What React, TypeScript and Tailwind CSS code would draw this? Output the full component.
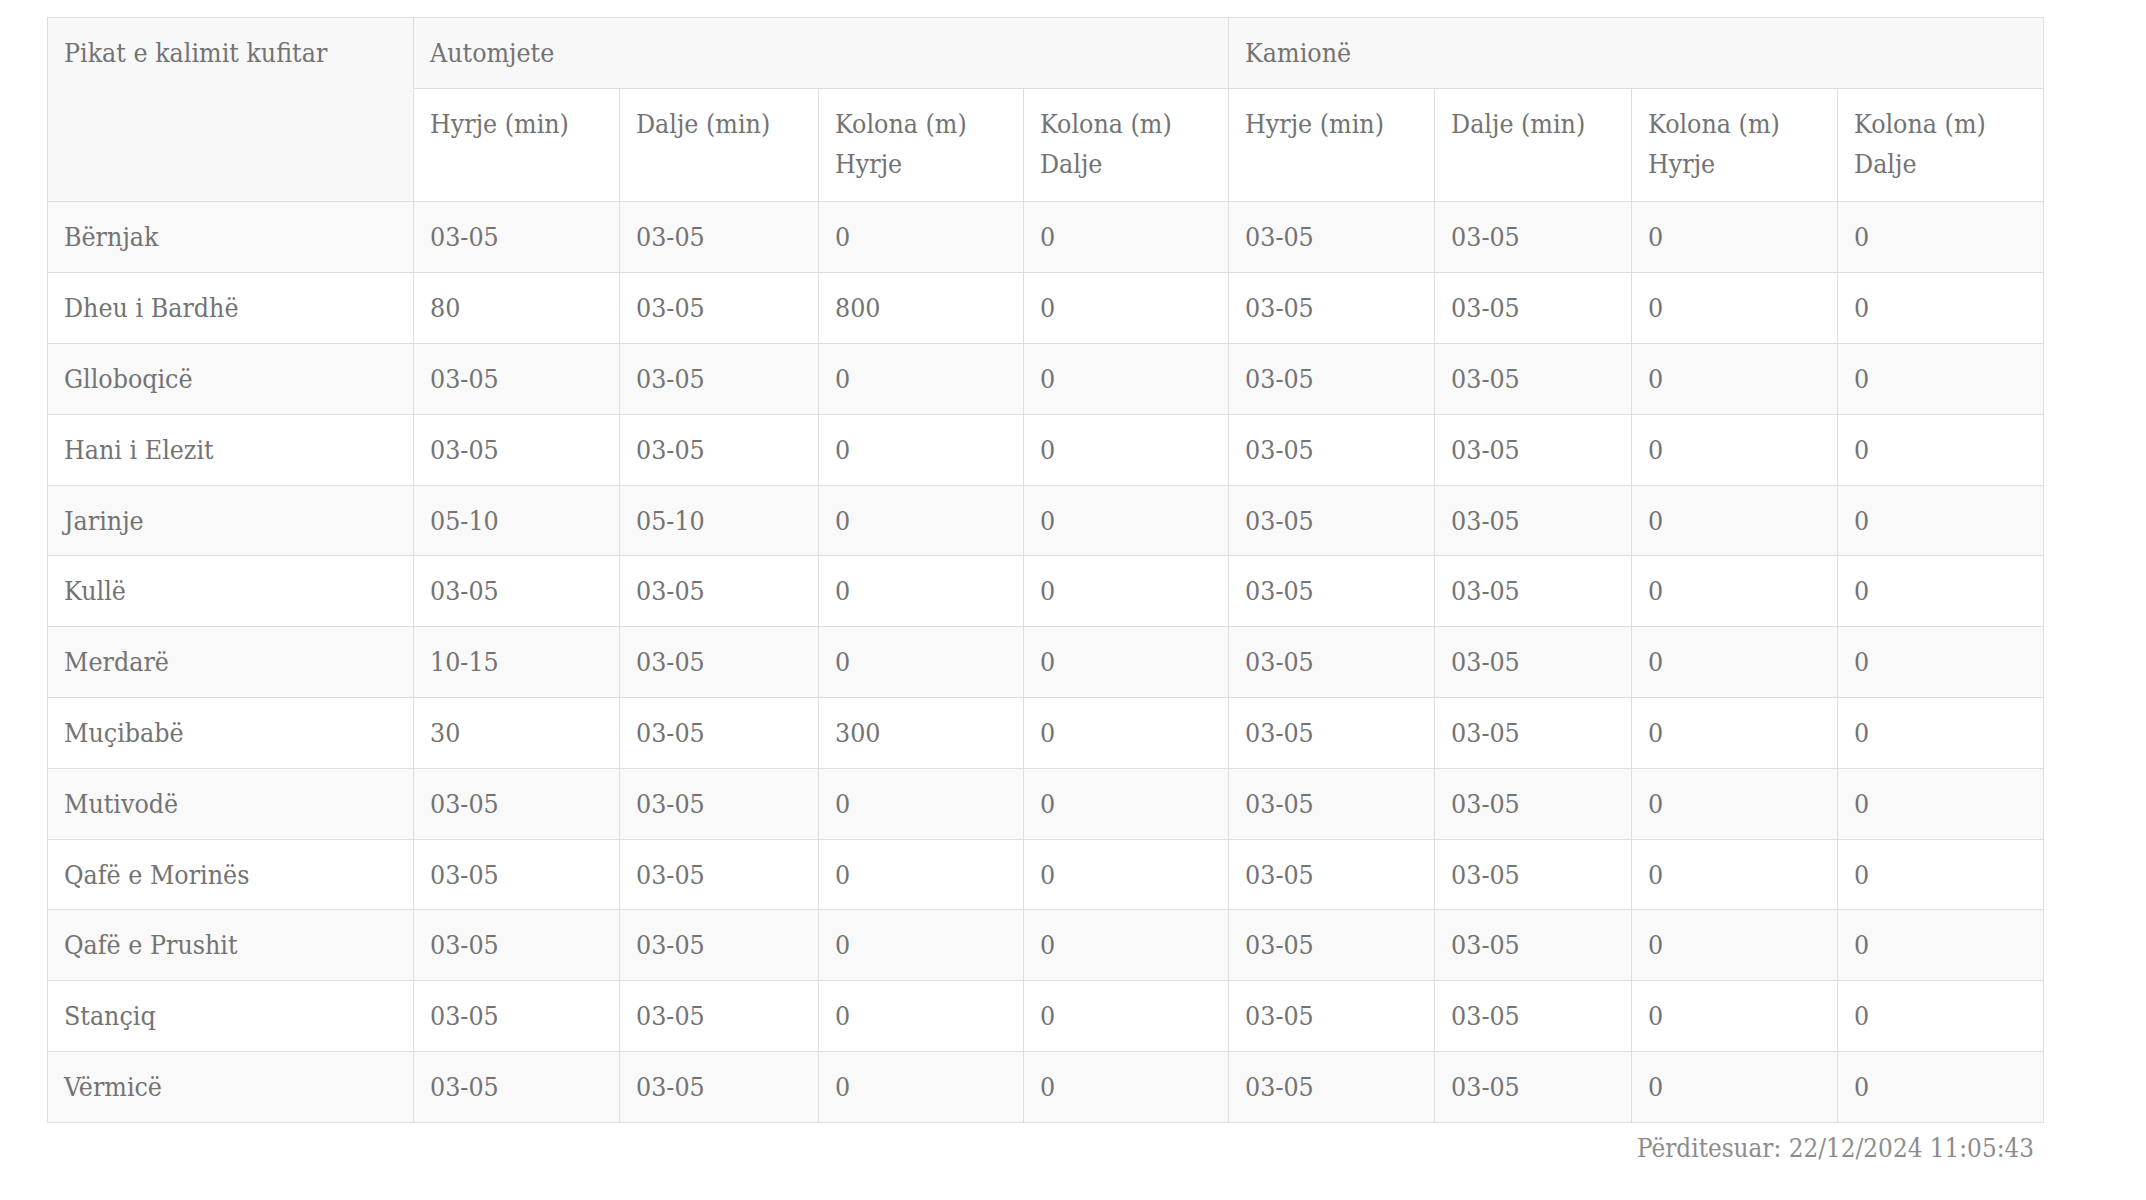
const rows = [
  ["Bërnjak", "03-05", "03-05", "0", "0", "03-05", "03-05", "0", "0"],
  ["Dheu i Bardhë", "80", "03-05", "800", "0", "03-05", "03-05", "0", "0"],
  ["Glloboqicë", "03-05", "03-05", "0", "0", "03-05", "03-05", "0", "0"],
  ["Hani i Elezit", "03-05", "03-05", "0", "0", "03-05", "03-05", "0", "0"],
  ["Jarinje", "05-10", "05-10", "0", "0", "03-05", "03-05", "0", "0"],
  ["Kullë", "03-05", "03-05", "0", "0", "03-05", "03-05", "0", "0"],
  ["Merdarë", "10-15", "03-05", "0", "0", "03-05", "03-05", "0", "0"],
  ["Muçibabë", "30", "03-05", "300", "0", "03-05", "03-05", "0", "0"],
  ["Mutivodë", "03-05", "03-05", "0", "0", "03-05", "03-05", "0", "0"],
  ["Qafë e Morinës", "03-05", "03-05", "0", "0", "03-05", "03-05", "0", "0"],
  ["Qafë e Prushit", "03-05", "03-05", "0", "0", "03-05", "03-05", "0", "0"],
  ["Stançiq", "03-05", "03-05", "0", "0", "03-05", "03-05", "0", "0"],
  ["Vërmicë", "03-05", "03-05", "0", "0", "03-05", "03-05", "0", "0"],
];

const cell = "border border-[#dedede] px-4 py-[15px] text-left align-top font-normal";
const sub = "border border-[#dedede] px-4 pt-[15px] pb-[18px] text-left align-top font-normal";

export default function App() {
  return (
    <div className="min-h-screen bg-white pl-[47px] pt-[17px] font-['DejaVu_Serif_Condensed','DejaVu_Serif',serif] font-stretch-condensed text-[26.5px] leading-[39.8px] text-[#737373]">
      <div className="w-[1996px]">
        <table className="w-[1996px] table-fixed border-collapse">
          <colgroup>
            <col className="w-[366px]" />
            <col className="w-[206px]" />
            <col className="w-[199px]" />
            <col className="w-[205px]" />
            <col className="w-[205px]" />
            <col className="w-[206px]" />
            <col className="w-[197px]" />
            <col className="w-[206px]" />
            <col className="w-[206px]" />
          </colgroup>
          <thead>
            <tr className="bg-[#f8f8f8]">
              <th rowSpan={2} className={cell}>Pikat e kalimit kufitar</th>
              <th colSpan={4} className={cell}>Automjete</th>
              <th colSpan={4} className={cell}>Kamionë</th>
            </tr>
            <tr className="bg-white">
              <th className={sub}>Hyrje (min)</th>
              <th className={sub}>Dalje (min)</th>
              <th className={sub}>Kolona (m)<br />Hyrje</th>
              <th className={sub}>Kolona (m)<br />Dalje</th>
              <th className={sub}>Hyrje (min)</th>
              <th className={sub}>Dalje (min)</th>
              <th className={sub}>Kolona (m)<br />Hyrje</th>
              <th className={sub}>Kolona (m)<br />Dalje</th>
            </tr>
          </thead>
          <tbody>
            {rows.map((r, i) => (
              <tr key={r[0]} className={i % 2 === 0 ? "bg-[#f9f9f9]" : "bg-white"}>
                {r.map((v, j) => (
                  <td key={j} className={cell}>{v}</td>
                ))}
              </tr>
            ))}
          </tbody>
        </table>
        <p className="mt-[6px] pr-[9px] text-right text-[25.8px] text-[#8c8c8c]">Përditesuar: 22/12/2024 11:05:43</p>
      </div>
    </div>
  );
}
